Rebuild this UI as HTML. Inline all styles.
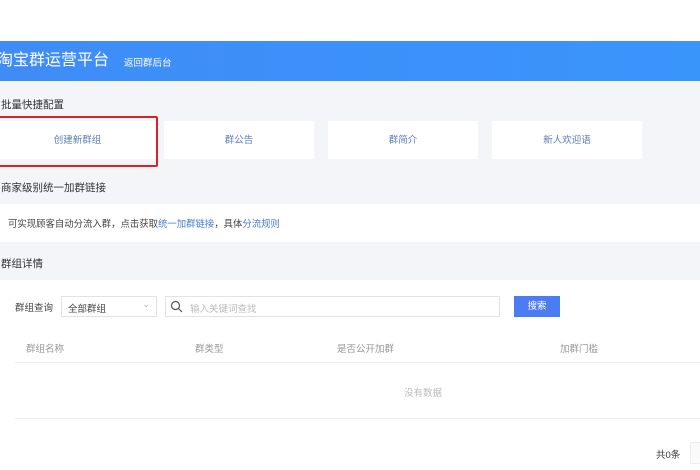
<!DOCTYPE html><html><head><meta charset="utf-8"><style>
*{margin:0;padding:0;box-sizing:border-box}
body{width:700px;height:470px;overflow:hidden;background:#f3f5f9;font-family:"Liberation Sans","Noto Sans CJK SC",sans-serif;position:relative;color:#333}
.a{position:absolute}
.hdr{top:41px;left:0;width:700px;height:40px;background:linear-gradient(90deg,#3f8cf7,#3a95fb)}
.card{background:#fff;height:38px;top:121px;font-size:9.5px;color:#5d7fb8;text-align:center;line-height:40px}
.t{font-size:10.5px;color:#333}
.g{color:#999;font-size:9.5px}
</style></head><body>
<div class="a" style="top:0;left:0;width:700px;height:41px;background:#fff"></div>
<div class="a hdr"></div>
<div class="a" style="top:49px;left:-3px;font-size:16px;color:#fff;line-height:24px">淘宝群运营平台</div>
<div class="a" style="top:55px;left:124px;font-size:9.5px;color:#fff">返回群后台</div>
<div class="a t" style="top:97px;left:1px">批量快捷配置</div>
<div class="a card" style="left:0;width:155px">创建新群组</div>
<div class="a" style="left:-2px;top:116px;width:160px;height:51px;border:2px solid #d9232a;border-radius:2px"></div>
<div class="a card" style="left:164px;width:150px">群公告</div>
<div class="a card" style="left:328px;width:150px">群简介</div>
<div class="a card" style="left:492px;width:150px">新人欢迎语</div>
<div class="a t" style="top:180px;left:1px">商家级别统一加群链接</div>
<div class="a" style="top:204px;left:0;width:700px;height:38px;background:#fff"></div>
<div class="a" style="top:216px;left:8px;font-size:9.4px;color:#444">可实现顾客自动分流入群，点击获取<span style="color:#4a7bd0">统一加群链接</span>，具体<span style="color:#4a7bd0">分流规则</span></div>
<div class="a t" style="top:256px;left:1px">群组详情</div>
<div class="a" style="top:280px;left:0;width:700px;height:190px;background:#fff"></div>
<div class="a" style="top:300px;left:15px;font-size:9.5px;color:#444">群组查询</div>
<div class="a" style="top:296px;left:61px;width:96px;height:21px;border:1px solid #e3e3e3;font-size:9.5px;color:#444;padding:4px 6px">全部群组<span style="position:absolute;right:6px;top:2px;color:#aaa;font-size:9px">⌄</span></div>
<div class="a" style="top:296px;left:165px;width:335px;height:21px;border:1px solid #e3e3e3"></div>
<svg class="a" style="top:300px;left:170px" width="13" height="13" viewBox="0 0 13 13"><circle cx="5.5" cy="5.5" r="4" fill="none" stroke="#555" stroke-width="1.2"/><path d="M8.5 8.5L12 12" stroke="#555" stroke-width="1.2"/></svg>
<div class="a g" style="top:301px;left:190px;color:#bbb">输入关键词查找</div>
<div class="a" style="top:296px;left:514px;width:46px;height:21px;background:#4b7cf3;color:#fff;font-size:9.5px;text-align:center;line-height:22px">搜索</div>
<div class="a g" style="top:341px;left:26px">群组名称</div>
<div class="a g" style="top:341px;left:195px">群类型</div>
<div class="a g" style="top:341px;left:337px">是否公开加群</div>
<div class="a g" style="top:341px;left:560px">加群门槛</div>
<div class="a" style="top:362px;left:15px;width:685px;height:1px;background:#eee"></div>
<div class="a g" style="top:385px;left:404px;color:#bbb">没有数据</div>
<div class="a" style="top:418px;left:15px;width:685px;height:1px;background:#eee"></div>
<div class="a" style="top:447px;left:656px;font-size:9.5px;color:#333">共0条</div>
<div class="a" style="top:442px;left:690px;width:12px;height:22px;border:1px solid #eee;background:#fafafa"></div>
</body></html>
